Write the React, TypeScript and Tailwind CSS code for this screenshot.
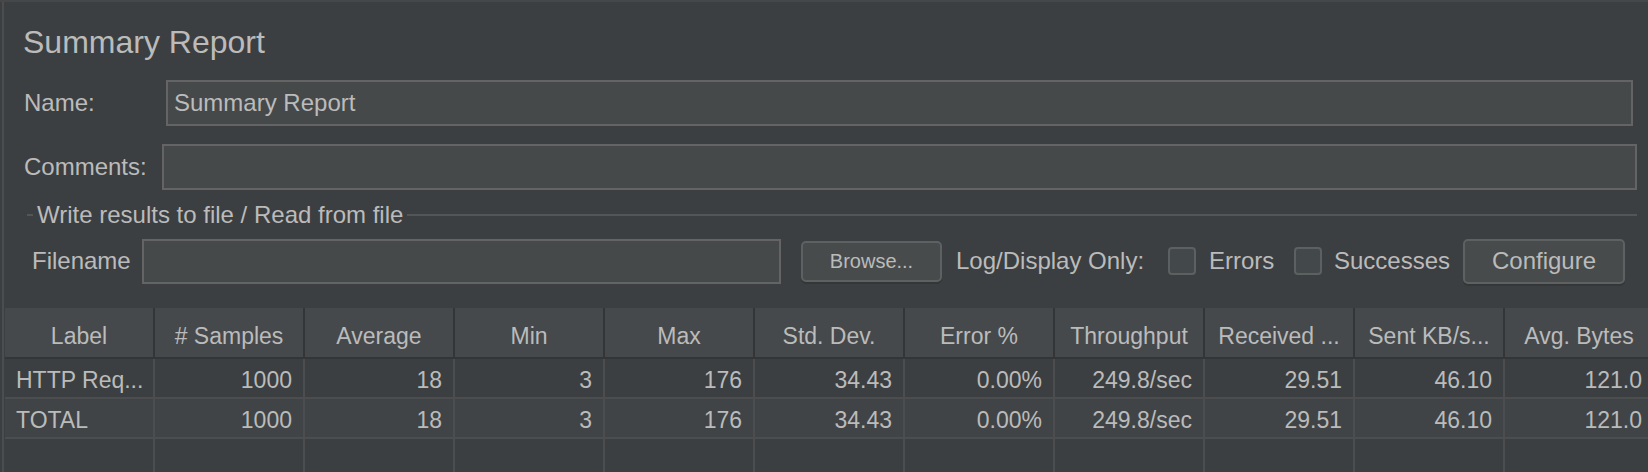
import React from "react";

const headers = [
  "Label",
  "# Samples",
  "Average",
  "Min",
  "Max",
  "Std. Dev.",
  "Error %",
  "Throughput",
  "Received ...",
  "Sent KB/s...",
  "Avg. Bytes",
];

const rowData = [
  ["HTTP Req...", "1000", "18", "3", "176", "34.43", "0.00%", "249.8/sec", "29.51", "46.10", "121.0"],
  ["TOTAL", "1000", "18", "3", "176", "34.43", "0.00%", "249.8/sec", "29.51", "46.10", "121.0"],
  ["", "", "", "", "", "", "", "", "", "", ""],
];

function Checkbox() {
  return (
    <div className="w-[28px] h-[28px] shrink-0 rounded-[4px] border-2 border-[#5c6061] bg-[#43494a]" />
  );
}

export default function App() {
  return (
    <div
      className="w-[1648px] h-[472px] overflow-hidden bg-[#3c3f41] text-[#bbbbbb] border-t-2 border-[#454749] pl-[2px]"
      style={{ fontFamily: '"Liberation Sans", Arial, Helvetica, sans-serif' }}
    >
      <div className="h-full border-l-2 border-[#4b4d4f] flex flex-col">
        {/* Title */}
        <div className="shrink-0 mt-[22px] pl-[19px] text-[32px] leading-[36px] h-[36px] whitespace-nowrap">
          Summary Report
        </div>

        {/* Name */}
        <div className="shrink-0 mt-[20px] flex items-center h-[46px] pl-[20px]">
          <div className="w-[142px] text-[24px] leading-[28px] shrink-0">Name:</div>
          <div className="w-[1467px] h-[46px] border-2 border-[#646464] bg-[#45494a] flex items-center pl-[6px] text-[24px] leading-[28px] whitespace-nowrap">
            Summary Report
          </div>
        </div>

        {/* Comments */}
        <div className="shrink-0 mt-[18px] flex items-center h-[46px] pl-[20px]">
          <div className="w-[138px] text-[24px] leading-[28px] shrink-0">Comments:</div>
          <div className="w-[1475px] h-[46px] border-2 border-[#646464] bg-[#45494a]" />
        </div>

        {/* Group title */}
        <div className="shrink-0 mt-[11px] h-[28px] flex items-center pl-[23px] pr-[11px]">
          <div className="w-[6px] h-[2px] bg-[#535557] shrink-0" />
          <div className="px-[4px] text-[24px] leading-[28px] whitespace-nowrap">
            Write results to file / Read from file
          </div>
          <div className="flex-1 h-[2px] bg-[#535557]" />
        </div>

        {/* Filename row */}
        <div className="shrink-0 mt-[9px] h-[46px] flex items-center pl-[28px] text-[24px] leading-[28px] whitespace-nowrap">
          <div className="w-[110px] shrink-0">Filename</div>
          <div className="w-[639px] h-[45px] shrink-0 border-2 border-[#646464] bg-[#45494a]" />
          <div className="ml-[20px] w-[141px] h-[41px] shrink-0 rounded-[5px] border-2 border-[#5e6162] bg-[#474b4c] shadow-[0_2px_0_#343638] flex items-center justify-center text-[20px] leading-[24px]">
            Browse...
          </div>
          <div className="ml-[14px] w-[212px] shrink-0">Log/Display Only:</div>
          <Checkbox />
          <div className="ml-[13px] w-[85px] shrink-0">Errors</div>
          <Checkbox />
          <div className="ml-[12px] w-[129px] shrink-0">Successes</div>
          <div className="w-[162px] h-[45px] shrink-0 rounded-[5px] border-2 border-[#5e6162] bg-[#474b4c] shadow-[0_2px_0_#343638] flex items-center justify-center text-[24px] leading-[28px]">
            Configure
          </div>
        </div>

        {/* Table */}
        <div className="shrink-0 mt-[24px] ml-[1px] flex flex-col text-[23px] leading-[26px] whitespace-nowrap">
          <div className="shrink-0 flex h-[51px] bg-[#46494b] border-b-2 border-[#333537]">
            {headers.map((h, i) => (
              <div
                key={i}
                className="w-[150px] shrink-0 h-full border-r-2 border-[#333537] flex items-center justify-center overflow-hidden pt-[6px]"
              >
                {h}
              </div>
            ))}
          </div>
          {rowData.map((r, ri) => (
            <div
              key={ri}
              className={
                "shrink-0 flex h-[40px] " + (ri === 1 ? "bg-[#414446]" : "bg-[#3c3f41]")
              }
            >
              {r.map((c, ci) => (
                <div
                  key={ci}
                  className={
                    "w-[150px] shrink-0 h-full border-r-2 border-b-2 border-[#4b4d4f] flex items-center overflow-hidden pt-[3px] " +
                    (ci === 0 ? "justify-start pl-[11px]" : "justify-end pr-[11px]")
                  }
                >
                  {c}
                </div>
              ))}
            </div>
          ))}
        </div>
      </div>
    </div>
  );
}
